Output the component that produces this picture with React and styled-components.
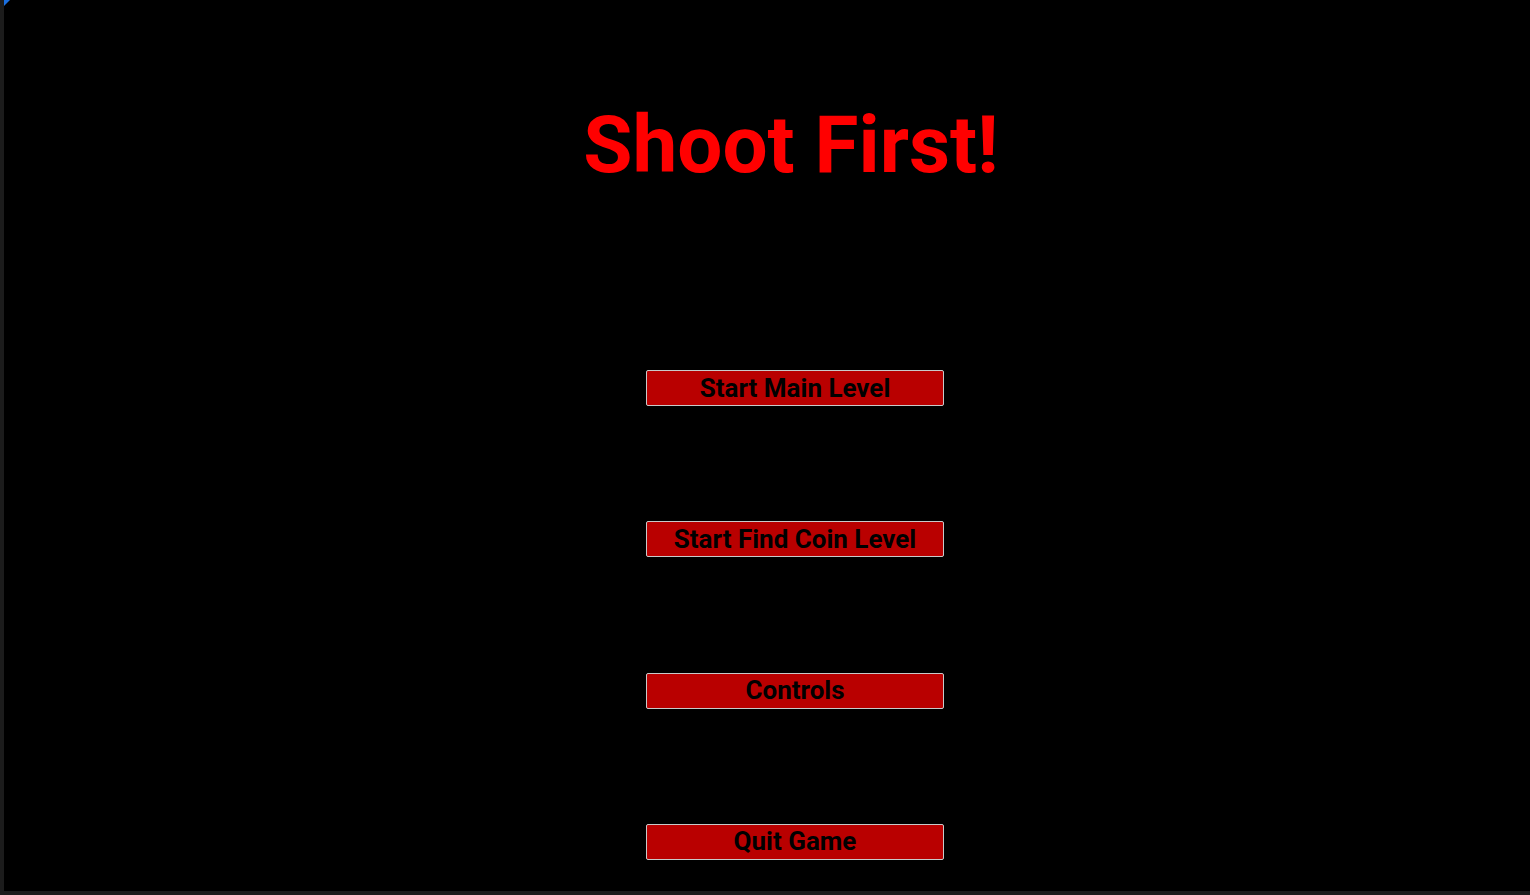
import React from "react";
import styled, { createGlobalStyle } from "styled-components";

const Global = createGlobalStyle`
  html, body { margin: 0; padding: 0; background: #000; }
  body { font-family: Roboto, "Liberation Sans", sans-serif; overflow: hidden; }
`;

const Frame = styled.div`
  position: relative;
  width: 1530px;
  height: 895px;
  box-sizing: border-box;
  background: #000;
  border-left: 4px solid #1c1c1c;
  border-bottom: 4px solid #1c1c1c;
  display: flex;
  flex-direction: column;
  align-items: center;
  padding-left: 56px;
`;

const Corner = styled.div`
  position: absolute;
  top: 0;
  left: 0;
  width: 0;
  height: 0;
  border-top: 6px solid #1a6fe0;
  border-right: 6px solid transparent;
`;

const Title = styled.h1`
  margin: 105px 8px 0 0;
  font-family: Roboto, "Liberation Sans", sans-serif;
  font-weight: 700;
  font-size: 80px;
  line-height: 1;
  color: #ff0000;
`;

const Menu = styled.div`
  margin-top: 185px;
  display: flex;
  flex-direction: column;
  gap: 115.3px;
`;

const MenuButton = styled.button`
  width: 298px;
  height: 36px;
  box-sizing: border-box;
  padding: 0;
  background: #b90000;
  border: 1px solid #c9c9c9;
  border-radius: 2px;
  color: #000;
  font-family: Roboto, "Liberation Sans", sans-serif;
  font-weight: 700;
  font-size: 26px;
  line-height: 33px;
  text-align: center;
  cursor: pointer;
`;

const items = ["Start Main Level", "Start Find Coin Level", "Controls", "Quit Game"];

export default function App() {
  return (
    <>
      <Global />
      <Frame>
        <Corner />
        <Title>Shoot First!</Title>
        <Menu>
          {items.map((t) => (
            <MenuButton key={t}>{t}</MenuButton>
          ))}
        </Menu>
      </Frame>
    </>
  );
}
